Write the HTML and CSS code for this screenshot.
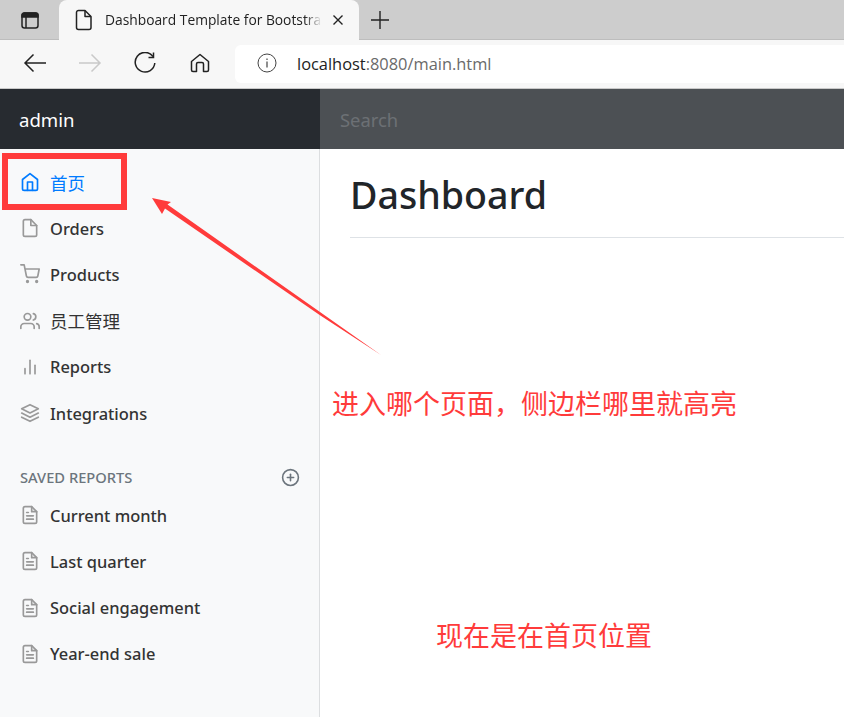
FILE: index.html
```html
<!DOCTYPE html>
<html lang="zh">
<head>
  <meta charset="UTF-8">
  <meta name="viewport" content="width=device-width, initial-scale=1.0">
  <title>Dashboard Template for Bootstrap</title>
  <link rel="stylesheet" href="styles.css">
</head>
<body>
  <div class="tabstrip">
    <div class="tab-toggle">
      <svg width="20" height="20" viewBox="0 0 20 20" fill="none" stroke="#222" stroke-width="1.5"><rect x="2" y="3" width="16" height="15" rx="2.5"/><path d="M2 5.5a2.5 2.5 0 0 1 2.5-2.5h11a2.5 2.5 0 0 1 2.5 2.5V7H2z" fill="#222"/><path d="M6 7v11"/></svg>
    </div>
    <div class="tab">
      <svg width="18" height="22" viewBox="0 0 18 22" fill="none" stroke="#222" stroke-width="1.5" stroke-linejoin="round"><path d="M3.5 1.5h6.5l6 6v11a2 2 0 0 1-2 2h-10.500a2 2 0 0 1-2-2v-15a2 2 0 0 1 2-2z"/><path d="M10 1.500v6h6"/></svg>
      <span class="tab-title">Dashboard Template for Bootstra</span>
      <svg class="tab-close" width="12" height="12" viewBox="0 0 12 12" stroke="#222" stroke-width="1.4"><path d="M1.500 1.500l9 9M10.500 1.500l-9 9"/></svg>
    </div>
    <svg class="new-tab" width="18" height="18" viewBox="0 0 18 18" stroke="#222" stroke-width="1.4"><path d="M9 0v18M0 9h18"/></svg>
  </div>

  <div class="toolbar">
    <svg class="tool-icon" width="24" height="20" viewBox="0 0 24 20" fill="none" stroke="#222" stroke-width="1.5"><path d="M23 10H2M10.500 1.500L2 10l8.500 8.500"/></svg>
    <svg class="tool-icon" width="24" height="20" viewBox="0 0 24 20" fill="none" stroke="#c9c9c9" stroke-width="1.5"><path d="M1 10h21M13.500 1.500L22 10l-8.500 8.500"/></svg>
    <svg class="tool-icon" width="22" height="22" viewBox="0 0 22 22" fill="none" stroke="#222" stroke-width="1.500"><path d="M19 4.500A9.800 9.800 0 1 0 20.800 11"/><path d="M19.500 0.500v5h-5"/></svg>
    <svg class="tool-icon" width="20" height="20" viewBox="0 0 20 20" fill="none" stroke="#222" stroke-width="1.500" stroke-linejoin="round"><path d="M1.500 8.500L10 1.500l8.500 7V17a1.500 1.500 0 0 1-1.500 1.500h-3.500V11a1.500 1.500 0 0 0-1.500-1.500H8A1.500 1.500 0 0 0 6.500 11v7.500H3A1.500 1.500 0 0 1 1.500 17z"/></svg>
    <div class="address">
      <svg class="info-icon" width="20" height="20" viewBox="0 0 20 20" fill="none" stroke="#444"><circle cx="10" cy="10" r="9"/><path d="M10 8.500v6M10 5.500v1.500" stroke-width="1.200"/></svg>
      <span class="url"><b>localhost</b>:8080/main.html</span>
    </div>
  </div>

  <nav class="navbar">
    <a class="brand" href="#">admin</a>
    <div class="search">Search</div>
  </nav>

  <div class="page">
    <aside class="sidebar">
      <ul class="nav-list">
        <li class="nav-item active">
          <svg class="icon" viewBox="0 0 24 24"><path d="M3 9l9-7 9 7v11a2 2 0 0 1-2 2H5a2 2 0 0 1-2-2z"/><polyline points="9 22 9 12 15 12 15 22"/></svg>
          <span class="cjk">首页</span>
        </li>
        <li class="nav-item">
          <svg class="icon" viewBox="0 0 24 24"><path d="M13 2H6a2 2 0 0 0-2 2v16a2 2 0 0 0 2 2h12a2 2 0 0 0 2-2V9z"/><polyline points="13 2 13 9 20 9"/></svg>
          Orders
        </li>
        <li class="nav-item">
          <svg class="icon" viewBox="0 0 24 24"><circle cx="9" cy="21" r="1"/><circle cx="20" cy="21" r="1"/><path d="M1 1h4l2.680 13.390a2 2 0 0 0 2 1.610h9.720a2 2 0 0 0 2-1.610L23 6H6"/></svg>
          Products
        </li>
        <li class="nav-item">
          <svg class="icon" viewBox="0 0 24 24"><path d="M17 21v-2a4 4 0 0 0-4-4H5a4 4 0 0 0-4 4v2"/><circle cx="9" cy="7" r="4"/><path d="M23 21v-2a4 4 0 0 0-3-3.870"/><path d="M16 3.130a4 4 0 0 1 0 7.750"/></svg>
          <span class="cjk">员工管理</span>
        </li>
        <li class="nav-item">
          <svg class="icon" viewBox="0 0 24 24"><line x1="18" y1="20" x2="18" y2="10"/><line x1="12" y1="20" x2="12" y2="4"/><line x1="6" y1="20" x2="6" y2="14"/></svg>
          Reports
        </li>
        <li class="nav-item">
          <svg class="icon" viewBox="0 0 24 24"><polygon points="12 2 2 7 12 12 22 7 12 2"/><polyline points="2 17 12 22 22 17"/><polyline points="2 12 12 17 22 12"/></svg>
          Integrations
        </li>
      </ul>

      <h6 class="sidebar-heading">
        <span>SAVED REPORTS</span>
        <svg class="icon-plus" viewBox="0 0 24 24"><circle cx="12" cy="12" r="10"/><line x1="12" y1="8" x2="12" y2="16"/><line x1="8" y1="12" x2="16" y2="12"/></svg>
      </h6>

      <ul class="nav-list">
        <li class="nav-item">
          <svg class="icon" viewBox="0 0 24 24"><path d="M14 2H6a2 2 0 0 0-2 2v16a2 2 0 0 0 2 2h12a2 2 0 0 0 2-2V8z"/><polyline points="14 2 14 8 20 8"/><line x1="16" y1="13" x2="8" y2="13"/><line x1="16" y1="17" x2="8" y2="17"/><polyline points="10 9 9 9 8 9"/></svg>
          Current month
        </li>
        <li class="nav-item">
          <svg class="icon" viewBox="0 0 24 24"><path d="M14 2H6a2 2 0 0 0-2 2v16a2 2 0 0 0 2 2h12a2 2 0 0 0 2-2V8z"/><polyline points="14 2 14 8 20 8"/><line x1="16" y1="13" x2="8" y2="13"/><line x1="16" y1="17" x2="8" y2="17"/><polyline points="10 9 9 9 8 9"/></svg>
          Last quarter
        </li>
        <li class="nav-item">
          <svg class="icon" viewBox="0 0 24 24"><path d="M14 2H6a2 2 0 0 0-2 2v16a2 2 0 0 0 2 2h12a2 2 0 0 0 2-2V8z"/><polyline points="14 2 14 8 20 8"/><line x1="16" y1="13" x2="8" y2="13"/><line x1="16" y1="17" x2="8" y2="17"/><polyline points="10 9 9 9 8 9"/></svg>
          Social engagement
        </li>
        <li class="nav-item">
          <svg class="icon" viewBox="0 0 24 24"><path d="M14 2H6a2 2 0 0 0-2 2v16a2 2 0 0 0 2 2h12a2 2 0 0 0 2-2V8z"/><polyline points="14 2 14 8 20 8"/><line x1="16" y1="13" x2="8" y2="13"/><line x1="16" y1="17" x2="8" y2="17"/><polyline points="10 9 9 9 8 9"/></svg>
          Year-end sale
        </li>
      </ul>
    </aside>

    <main class="main">
      <h1 class="page-title">Dashboard</h1>
    </main>
  </div>

  <!-- annotations drawn over the page -->
  <div class="mark-box"></div>
  <svg class="mark-arrow" width="844" height="717" viewBox="0 0 844 717"><polygon points="152,198 171,202 167.500,204.500 320,312 381,355 320,315.300 165,208.500 162,214" fill="#ff3b3b"/></svg>
  <div class="note note-one">进入哪个页面，侧边栏哪里就高亮</div>
  <div class="note note-two">现在是在首页位置</div>
</body>
</html>
```

FILE: styles.css
```css
*, *::before, *::after { box-sizing: border-box; }
html, body {
  margin: 0;
  padding: 0;
  height: 717px;
  overflow: hidden;
  background: white;
  font-family: 'Noto Sans', 'Noto Sans CJK SC', sans-serif;
}
.tabstrip {
  display: flex;
  align-items: flex-end;
  height: 40px;
  background: #cdcdcd;
  border-bottom: 1px solid #bdbdbd;
}
.tab-toggle {
  display: flex;
  align-items: center;
  justify-content: center;
  width: 59px;
  height: 39px;
}
.tab {
  display: flex;
  align-items: center;
  width: 300px;
  height: 40px;
  margin-bottom: -1px;
  padding: 0 15px 0 16px;
  background: #f7f7f7;
  border-radius: 8px 8px 0 0;
}
.tab-title {
  flex: 1;
  margin-left: 12px;
  margin-bottom: 2px;
  white-space: nowrap;
  font-family: 'Open Sans', sans-serif;
  font-size: 13.800px;
  color: #222;
  -webkit-mask-image: linear-gradient(to right, black 92%, transparent);
  mask-image: linear-gradient(to right, black 92%, transparent);
}
.tab-close {
  flex: none;
  margin-left: 10px;
}
.new-tab {
  align-self: center;
  margin-left: 12px;
}
.toolbar {
  display: flex;
  align-items: center;
  height: 49px;
  padding: 5px 0 5px 23px;
  background: #f7f7f7;
  border-bottom: 1px solid #c9c9c9;
}
.tool-icon {
  flex: none;
  margin-right: 31px;
  margin-bottom: 2px;
}
.tool-icon:nth-child(2) { margin-right: 32px; }
.tool-icon:nth-child(3) { margin-right: 34px; }
.tool-icon:nth-child(4) { margin-right: 25px; }
.address {
  display: flex;
  flex: 1;
  align-items: center;
  height: 38px;
  padding-left: 22px;
  background: white;
  border-radius: 6px 0 0 6px;
}
.info-icon { margin-bottom: 2px; }
.url {
  margin-left: 20px;
  margin-bottom: 2px;
  font-family: 'Open Sans', sans-serif;
  font-size: 16.400px;
  color: #6a6a6a;
}
.url b {
  font-weight: normal;
  color: #222;
}
.navbar {
  display: flex;
  height: 60px;
  background: #343a40;
}
.brand {
  display: flex;
  align-items: center;
  width: 320px;
  padding-left: 19px;
  background: #272b30;
  color: white;
  font-size: 18.600px;
  text-decoration: none;
}
.search {
  display: flex;
  flex: 1;
  align-items: center;
  padding-left: 20px;
  background: #4c5054;
  color: #6c7075;
  font-size: 18.400px;
}
.page {
  display: flex;
  height: 568px;
}
.sidebar {
  flex: none;
  width: 320px;
  padding-top: 10px;
  background: #f8f9fa;
  border-right: 1px solid #dcdee0;
}
.nav-list {
  list-style: none;
  margin: 0;
  padding: 0;
}
.nav-item {
  display: flex;
  align-items: center;
  height: 46.200px;
  padding-left: 20px;
  color: #333;
  font-size: 16.450px;
  font-weight: 500;
}
.nav-item.active { color: #007bff; }
.cjk {
  font-size: 17.500px;
  font-weight: 400;
}
.icon {
  flex: none;
  width: 20px;
  height: 20px;
  margin-right: 10px;
  fill: none;
  stroke: #999;
  stroke-width: 2;
  stroke-linecap: round;
  stroke-linejoin: round;
}
.active .icon { stroke: #007bff; }
.sidebar-heading {
  display: flex;
  align-items: center;
  justify-content: space-between;
  height: 24px;
  margin: 29px 19px 3px 20px;
  color: #6c757d;
  font-size: 14.700px;
  font-weight: 500;
}
.icon-plus {
  width: 19px;
  height: 19px;
  fill: none;
  stroke: #6c757d;
  stroke-width: 2;
  stroke-linecap: round;
  stroke-linejoin: round;
}
.main {
  flex: 1;
  padding: 0 0 0 30px;
}
.page-title {
  height: 89px;
  margin: 0;
  padding-top: 19px;
  border-bottom: 1px solid #dee2e6;
  color: #212529;
  font-size: 37.600px;
  font-weight: 500;
  line-height: 54px;
}
.mark-box {
  position: absolute;
  left: 2px;
  top: 153px;
  width: 125px;
  height: 57px;
  border: 6px solid #ff3b3b;
}
.mark-arrow {
  position: absolute;
  left: 0;
  top: 0;
  pointer-events: none;
}
.note {
  position: absolute;
  color: #ff3b3b;
  font-size: 27px;
  line-height: 36px;
  white-space: nowrap;
}
.note-one {
  left: 332px;
  top: 386px;
}
.note-two {
  left: 436px;
  top: 618px;
}
```
